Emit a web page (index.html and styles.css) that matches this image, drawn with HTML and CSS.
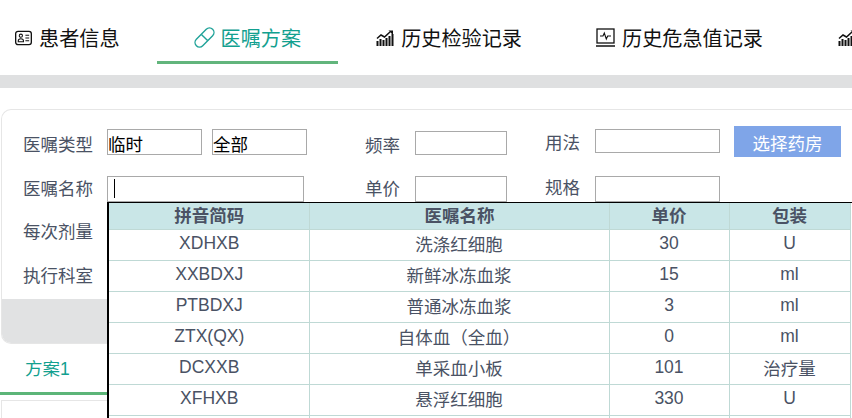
FILE: index.html
```html
<!DOCTYPE html>
<html lang="zh-CN">
<head>
<meta charset="utf-8">
<title>医嘱方案</title>
<link rel="stylesheet" href="styles.css">
</head>
<body>
<nav class="nav">
  <a class="nav-item first">
    <svg class="ico idc" viewBox="0 0 18 16"><rect x="0.7" y="1" width="16.6" height="14" rx="2.5" fill="none" stroke="#111" stroke-width="1.4"/><circle cx="6.2" cy="5.6" r="1.7" fill="none" stroke="#111" stroke-width="1.1"/><path d="M3.4 12v-.8c0-1.4 1.2-2.4 2.8-2.4s2.8 1 2.8 2.4v.8z" fill="none" stroke="#111" stroke-width="1.1"/><path d="M11 5h4M11 8h4M11 11h4" stroke="#111" stroke-width="1.1"/></svg>
    <span>患者信息</span>
  </a>
  <a class="nav-item active">
    <svg class="ico pill" viewBox="0 0 21 21"><g fill="none" stroke="#1fa298" stroke-width="1.4"><rect x="-1" y="6" width="23" height="9" rx="4.5" transform="rotate(-45 10.5 10.5)"/><path d="M7.4 7.4l6.2 6.2"/></g></svg>
    <span>医嘱方案</span>
  </a>
  <a class="nav-item">
    <svg class="ico chart" viewBox="0 0 18 16"><path d="M1 8.5L5 5l3.5 2L14 2" fill="none" stroke="#111" stroke-width="1.5"/><path d="M12.5 0.5h4.5v4.5z" fill="#111"/><path d="M0.5 11h2v5h-2zM3.5 9h2v7h-2zM6.5 10h2v6h-2zM9.5 8h2v8h-2zM12.5 6h2v10h-2zM15.5 4h2v12h-2z" fill="#111"/></svg>
    <span>历史检验记录</span>
  </a>
  <a class="nav-item">
    <svg class="ico mon" viewBox="0 0 19 19"><rect x="1" y="1" width="17" height="14" fill="none" stroke="#111" stroke-width="1.3"/><path d="M0 18h19" stroke="#111" stroke-width="1.5"/><path d="M4 8h3l1.3-3 2 6 1.4-3h3.3" fill="none" stroke="#111" stroke-width="1.1"/></svg>
    <span>历史危急值记录</span>
  </a>
  <a class="nav-item">
    <svg class="ico chart" viewBox="0 0 18 16"><path d="M1 8.5L5 5l3.5 2L14 2" fill="none" stroke="#111" stroke-width="1.5"/><path d="M12.5 0.5h4.5v4.5z" fill="#111"/><path d="M0.5 11h2v5h-2zM3.5 9h2v7h-2zM6.5 10h2v6h-2zM9.5 8h2v8h-2zM12.5 6h2v10h-2zM15.5 4h2v12h-2z" fill="#111"/></svg>
  </a>
</nav>
<div class="band"></div>

<section class="card">
  <div class="form">
    <div class="row row-a">
      <label class="lbl l1">医嘱类型</label>
      <input class="field f-type" value="临时">
      <input class="field f-type f-gap" value="全部">
      <label class="lbl l2 low">频率</label>
      <input class="field f-mid low2">
      <label class="lbl l3">用法</label>
      <input class="field f-wide short">
      <button class="btn">选择药房</button>
    </div>
    <div class="row row-b">
      <label class="lbl l1">医嘱名称</label>
      <div class="field f-name"><span class="caret"></span></div>
      <label class="lbl l2">单价</label>
      <input class="field f-mid">
      <label class="lbl l3">规格</label>
      <input class="field f-wide">
    </div>
    <div class="row row-c"><label class="lbl l1">每次剂量</label></div>
    <div class="row row-d"><label class="lbl l1">执行科室</label></div>
  </div>
  <div class="card-foot"></div>
</section>

<div class="subtabs"><a class="subtab">方案1</a></div>
<section class="card2"></section>

<div class="dropdown">
  <table class="grid">
    <colgroup><col class="c1"><col class="c2"><col class="c3"><col class="c4"></colgroup>
    <thead><tr><th>拼音简码</th><th>医嘱名称</th><th>单价</th><th>包装</th></tr></thead>
    <tbody>
      <tr><td class="lat">XDHXB</td><td>洗涤红细胞</td><td class="lat">30</td><td class="lat">U</td></tr>
      <tr><td class="lat">XXBDXJ</td><td>新鲜冰冻血浆</td><td class="lat">15</td><td class="lat">ml</td></tr>
      <tr><td class="lat">PTBDXJ</td><td>普通冰冻血浆</td><td class="lat">3</td><td class="lat">ml</td></tr>
      <tr><td class="lat">ZTX(QX)</td><td>自体血（全血）</td><td class="lat">0</td><td class="lat">ml</td></tr>
      <tr><td class="lat">DCXXB</td><td>单采血小板</td><td class="lat">101</td><td>治疗量</td></tr>
      <tr><td class="lat">XFHXB</td><td>悬浮红细胞</td><td class="lat">330</td><td class="lat">U</td></tr>
      <tr class="next"><td></td><td></td><td></td><td></td></tr>
    </tbody>
  </table>
</div>
</body>
</html>
```

FILE: styles.css
```css
* { box-sizing: border-box; }
html, body { margin: 0; height: 100%; overflow: hidden; background: #fff; }
body {
  position: relative;
  width: 852px;
  height: 418px;
  font-family: "Liberation Sans", "Noto Sans CJK SC", sans-serif;
  font-size: 17.5px;
  color: #4a5264;
}

/* top navigation */
.nav { display: flex; height: 75px; padding-top: 14px; white-space: nowrap; overflow: hidden; }
.nav-item { display: flex; align-items: center; flex: none; height: 50px; padding: 0 37px; font-size: 20.15px; color: #111; border-bottom: 3px solid transparent; }
.nav-item.first { padding-left: 15px; }
.nav-item.active { color: #12a08f; border-bottom-color: #62b57c; }
.ico { width: 18px; height: 16px; margin-right: 8px; flex: none; }
.ico.idc { width: 17px; margin-right: 7px; }
.ico.pill { width: 21px; height: 21px; margin-right: 6px; }
.ico.chart { margin-right: 7px; margin-left: 1px; }
.ico.mon { width: 19px; height: 19px; margin-right: 7px; }
.band { height: 13px; background: #dfe0e1; }

/* main card */
.card { margin: 21px 0 0 1px; height: 235px; border: 1px solid #e6e6e6; border-right: 0; border-radius: 10px 0 0 10px; display: flex; flex-direction: column; overflow: hidden; }
.form { flex: 1; }
.row { display: flex; align-items: flex-start; position: relative; }
.row-a { height: 66px; padding-top: 19px; }
.row-b { height: 44px; }
.row-c { height: 40px; }
.row-d { height: 0; }
.lbl { flex: none; line-height: 24px; white-space: nowrap; }
.l1 { width: 84px; margin-left: 21px; padding-top: 4px; }
.row-b .l1 { padding-top: 1px; }
.row-c .l1 { padding-top: 0; }
.l2 { width: 50px; margin-left: 61px; padding-top: 1px; }
.row-a .l2 { margin-left: 58px; padding-top: 5px; }
.l3 { width: 50px; margin-left: 38px; padding-top: 2px; }
.row-b .l3 { padding-top: 0; }
.field { flex: none; display: block; height: 26px; padding: 3px 0 0 0; border: 1px solid #a9a9a9; border-radius: 0; background: #fff; font: inherit; color: #000; outline: 0; }
.f-type { width: 95px; }
.f-gap { margin-left: 10px; }
.low2 { margin-top: 2px; height: 24px; }
.f-mid { width: 92px; }
.f-wide { width: 125px; }
.short { height: 24px; }
.f-name { width: 197px; padding-left: 6px; padding-top: 2px; }
.caret { display: block; width: 1px; height: 19px; background: #000; }
.btn { flex: none; width: 107px; height: 31px; margin: -3px 0 0 14px; padding: 2px 0 0; border: 0; background: #7fa5e8; color: #fff; font: inherit; }
.card-foot { height: 44px; background: #e1e2e3; }

/* sub tabs */
.subtabs { height: 51px; }
.subtab { display: block; width: 108px; height: 51px; padding: 13px 0 0 25px; line-height: 24px; color: #12a08f; border-bottom: 3px solid #5cb578; }
.card2 { margin: 5px 0 0 1px; height: 30px; border: 1px solid #e6e6e6; border-right: 0; }

/* suggestion dropdown over the form */
.dropdown { position: absolute; left: 107px; top: 202px; width: 745px; height: 216px; background: #fff; border-top: 1px solid #000; border-left: 2px solid #000; overflow: hidden; }
.grid { width: 741px; border-collapse: collapse; table-layout: fixed; }
.c1 { width: 200px; }
.c2 { width: 300px; }
.c3 { width: 120px; }
.c4 { width: 121px; }
.grid th, .grid td { padding: 0; text-align: center; border: 1px solid #bfd9d5; border-top: 0; }
.grid th:first-child, .grid td:first-child { border-left: 0; padding-left: 1px; }
.grid th:nth-child(2) { padding-left: 1px; }
.grid th { height: 26px; padding-top: 2px; line-height: 23px; background: #c9e6e7; font-weight: 700; }
.grid td { height: 31px; line-height: 24px; padding-top: 3px; vertical-align: top; }
.grid td.lat { padding-top: 1px; }
```
